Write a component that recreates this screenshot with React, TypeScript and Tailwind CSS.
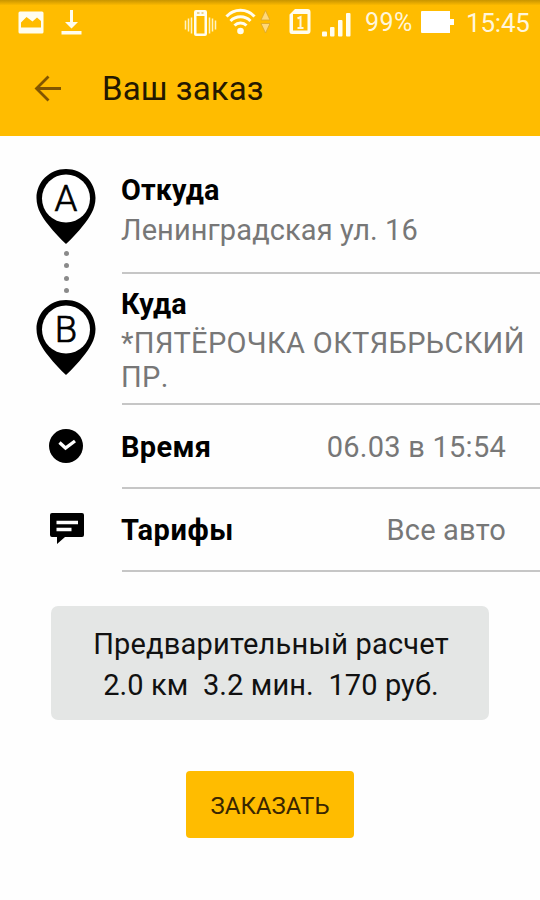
function StatusBar() {
  return (
    <div className="flex h-[46px] items-center bg-linear-to-b from-[#c99500] from-0% to-[#ffbc00] to-12% text-[#fff6dc]">
      <svg width="270" height="46" viewBox="0 0 270 46" className="shrink-0">
        <g fill="#fffdf0">
          <path
            fillRule="evenodd"
            d="M20 11.500h22a1.500 1.500 0 0 1 1.500 1.500v19a1.500 1.500 0 0 1-1.500 1.500H20a1.500 1.500 0 0 1-1.500-1.500V13a1.500 1.500 0 0 1 1.500-1.500zM21 27.500h20v-6.500l-4-3.500-4.500 4-6-4.500-5.500 5.500z"
          />
          <path d="M70 10h3v12h5l-6.500 6.500L65 22h5zM61.500 31h20v3.500h-20z" />
          <path
            fillRule="evenodd"
            d="M196 10h9a2 2 0 0 1 2 2v22a2 2 0 0 1-2 2h-9a2 2 0 0 1-2-2V12a2 2 0 0 1 2-2zM196.500 16v17.500h8V16z"
          />
        </g>
        <path d="M197 13h2.500M201.500 13h2" stroke="#d9a520" strokeWidth="1.200" />
        <path
          d="M185.500 20.500v9M188.500 18.500v13M191.500 17.500v16M209.500 17.500v16M212.500 18.500v13M215.500 20.500v9"
          stroke="#fff3c4"
          strokeWidth="1.500"
        />
        <g fill="none" stroke="#fffdf0" strokeWidth="3">
          <path d="M226.500 16.500a19 19 0 0 1 28 0" />
          <path d="M230.500 21a14 14 0 0 1 20 0" />
          <path d="M234.500 25.500a8.500 8.500 0 0 1 12 0" />
        </g>
        <circle cx="240.500" cy="31" r="3.300" fill="#fffdf0" />
        <path
          d="M265.500 10.500l4.500 9.500h-9zM265.500 33l4.500-9.500h-9z"
          fill="#ffd87a"
          stroke="#d9a62b"
          strokeWidth=".8"
        />
      </svg>
      <svg width="94" height="46" viewBox="270 0 94 46" className="shrink-0">
        <path
          fillRule="evenodd"
          d="M295 9h12.500a3 3 0 0 1 3 3v19a3 3 0 0 1-3 3H292a2.500 2.500 0 0 1-2.500-2.500V14.500zM293 14v16.500h14.500V14z"
          fill="#fffdf0"
        />
        <path d="M297.500 18.500l3-1.500v11M297.500 28h6" fill="none" stroke="#fff6dc" strokeWidth="2" />
        <g fill="#fffdf0">
          <rect x="322" y="31.500" width="5" height="5" rx="1" />
          <rect x="330" y="27" width="4.500" height="9.500" rx="1" />
          <rect x="338" y="20" width="4.500" height="16.500" rx="1" />
          <rect x="346" y="13" width="4.500" height="23.500" rx="1" />
        </g>
      </svg>
      <span className="w-[56px] pl-px text-[25px] leading-[44px] tracking-[0.4px] whitespace-nowrap">99%</span>
      <svg width="46" height="46" viewBox="420 0 46 46" className="shrink-0">
        <path d="M422 11h28v8h4v6h-4v8h-28a1 1 0 0 1-1-1V12a1 1 0 0 1 1-1z" fill="#fff" />
      </svg>
      <span className="text-[26px] leading-[43px] tracking-[-0.2px] whitespace-nowrap">15:45</span>
    </div>
  );
}

function Pin({ letter }: { letter: string }) {
  return (
    <svg width="60" height="76" viewBox="0 0 60 76" className="shrink-0">
      <path
        d="M30 0C13.500 0 .500 13 .500 29c0 11 6 19.500 12 27C18 63 24 69.500 30 75c6-5.500 12-12 17.500-19 6-7.500 12-16 12-27C59.500 13 46.500 0 30 0z"
        fill="#000"
      />
      <circle cx="30" cy="29.500" r="24" fill="#fff" />
      <text x="30" y="42" textAnchor="middle" fontSize="36.500" fontWeight="300" fill="#000" stroke="#000" strokeWidth=".7">
        {letter}
      </text>
    </svg>
  );
}

function Dots() {
  return (
    <div className="flex h-[55px] flex-col items-center gap-[7.5px] pt-[6px]">
      {[0, 1, 2, 3].map((i) => (
        <span key={i} className="size-[5px] shrink-0 rounded-full bg-[#8a8a8a]" />
      ))}
    </div>
  );
}

export default function App() {
  return (
    <div className="flex h-[900px] w-[540px] flex-col overflow-hidden bg-[#fefefe] font-['Roboto',sans-serif] text-black">
      <header className="h-[135.5px] shrink-0 bg-[#ffbc00]">
        <StatusBar />
        <div className="flex h-[85px] items-center pl-[34px]">
          <svg width="28" height="28" viewBox="0 0 28 28" fill="none" stroke="#825600" strokeWidth="2.800">
            <path d="M27 13.500H3M14.500 1.500L2.500 13.500l12 12" />
          </svg>
          <h1 className="ml-[40px] text-[33px] leading-[84px] tracking-[0.1px] text-[#241800]">Ваш заказ</h1>
        </div>
      </header>

      <main className="flex h-[436px] shrink-0">
        <div className="flex w-[121px] shrink-0 flex-col items-center pt-[33px] pl-[11px]">
          <Pin letter="A" />
          <Dots />
          <Pin letter="B" />
          <svg width="34" height="34" viewBox="0 0 34 34" className="mt-[53px] shrink-0">
            <circle cx="17" cy="17" r="17" fill="#000" />
            <path d="M10.500 13.500l6 5.500 9.500-7" fill="none" stroke="#fff" strokeWidth="3.300" />
          </svg>
          <svg width="34" height="31" viewBox="0 0 34 31" className="mt-[50px] ml-px shrink-0">
            <path d="M2 0h30a2 2 0 0 1 2 2v20a2 2 0 0 1-2 2H15l-8 7v-7H2a2 2 0 0 1-2-2V2a2 2 0 0 1 2-2z" fill="#000" />
            <path d="M6.500 9.500h21.500M6.500 16.500h15" stroke="#fff" strokeWidth="3.500" />
          </svg>
        </div>

        <div className="flex-1 pl-px text-[29px] tracking-[0.1px]">
          <section className="h-[138.5px] border-b-2 border-[#c6c6c6] pt-[34px]">
            <h2 className="-ml-px text-[28.800px] leading-[40px] font-bold">Откуда</h2>
            <p className="-ml-px leading-[41px] text-[#777]">Ленинградская ул. 16</p>
          </section>
          <section className="h-[131px] border-b-2 border-[#c6c6c6] pt-[10px]">
            <h2 className="-ml-px text-[28.800px] leading-[40px] font-bold">Куда</h2>
            <p className="-ml-px pt-[2px] leading-[34px] tracking-[0.35px] whitespace-nowrap text-[#777]">
              *ПЯТЁРОЧКА ОКТЯБРЬСКИЙ
              <br />
              <span className="tracking-[0.4px] [font-kerning:none]">ПР.</span>
            </p>
          </section>
          <section className="flex h-[83.5px] items-center justify-between border-b-2 border-[#c6c6c6] pt-[3px] pr-[34px]">
            <h2 className="-ml-px tracking-[0.3px] font-bold">Время</h2>
            <span className="tracking-[0.25px] text-[#777]">06.03 в 15:54</span>
          </section>
          <section className="flex h-[83px] items-center justify-between border-b-2 border-[#c6c6c6] pt-[4px] pr-[34px]">
            <h2 className="-ml-px tracking-[0.6px] font-bold">Тарифы</h2>
            <span className="tracking-[0.2px] text-[#777]">Все авто</span>
          </section>
        </div>
      </main>

      <div className="mt-[34px] ml-[51px] h-[114px] w-[438px] shrink-0 rounded-[7px] bg-[#e4e6e5] pt-[18px] pl-[2px] text-center text-[29px] leading-[41px] tracking-[0.2px] text-[#111]">
        <p>Предварительный расчет</p>
        <p className="tracking-[0.1px] whitespace-pre">2.0 км  3.2 мин.  170 руб.</p>
      </div>

      <button className="mt-[51px] ml-[186px] h-[67px] w-[168px] shrink-0 rounded-[4px] bg-[#ffbc00] pt-[3px] text-[24px] text-[#3a2600]">
        ЗАКАЗАТЬ
      </button>
    </div>
  );
}
